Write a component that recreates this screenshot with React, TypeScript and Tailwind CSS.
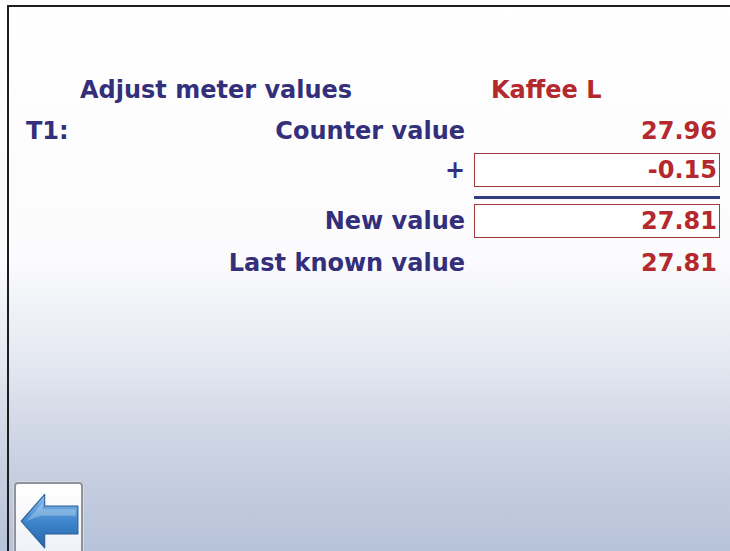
import React from "react";

const navy = "text-[#332f7b]";
const red = "text-[#b3292d]";

export default function App() {
  return (
    <div
      className="relative w-[730px] h-[551px] overflow-hidden bg-[linear-gradient(to_bottom,#ffffff_0%,#fbfbfd_48%,#e3e7f0_66%,#cbd2e2_82%,#b7c3da_100%)]"
      style={{ fontFamily: '"DejaVu Sans", Verdana, sans-serif' }}
    >
      <div className="ml-[7px] mt-[5px] w-[723px] border-t-2 border-l-2 border-t-[#1e1e1e] border-l-[#1e1e1e] flex flex-col pt-[66px] pb-[20px] font-bold text-[24px] leading-none">
        {/* Title row */}
        <div className="h-[34px] flex items-center">
          <div className={`w-[482px] pl-[71px] ${navy}`}>Adjust meter values</div>
          <div className={red}>Kaffee L</div>
        </div>
        {/* Counter value */}
        <div className="mt-[7px] h-[34px] flex items-center">
          <div className={`w-[465px] flex items-center justify-between pl-[17px] pr-[9px] ${navy}`}>
            <span>T1:</span>
            <span>Counter value</span>
          </div>
          <div className={`w-[246px] text-right pr-[3px] ${red}`}>27.96</div>
        </div>
        {/* Plus row */}
        <div className="mt-[5px] h-[34px] flex items-center">
          <div className={`w-[465px] text-right pr-[9px] ${navy}`}>+</div>
          <div className={`w-[246px] h-[34px] border border-[#a23a3a] bg-white flex items-center justify-end pr-[2px] ${red}`}>
            -0.15
          </div>
        </div>
        {/* Line */}
        <div className="mt-[9px] flex">
          <div className="w-[465px]" />
          <div className="w-[246px] h-[3px] bg-[#343c80]" />
        </div>
        {/* New value */}
        <div className="mt-[5px] h-[34px] flex items-center">
          <div className={`w-[465px] text-right pr-[9px] ${navy}`}>New value</div>
          <div className={`w-[246px] h-[34px] border border-[#a23a3a] bg-white flex items-center justify-end pr-[2px] ${red}`}>
            27.81
          </div>
        </div>
        {/* Last known value */}
        <div className="mt-[8px] h-[34px] flex items-center">
          <div className={`w-[465px] text-right pr-[9px] ${navy}`}>Last known value</div>
          <div className={`w-[246px] text-right pr-[3px] ${red}`}>27.81</div>
        </div>
        {/* Back button */}
        <div className="mt-[202px] ml-[5px] w-[69px] h-[72px] rounded-[4px] border-2 border-[#8e939c] bg-[linear-gradient(to_bottom,#ffffff,#eef1f6)] flex items-start justify-center pt-[6px] shadow-[0_0_0_1px_#d6dae2]">
          <svg width="60" height="60" viewBox="0 0 56 56">
            <defs>
              <linearGradient id="ag" x1="0" y1="0" x2="0" y2="1">
                <stop offset="0" stopColor="#8cc0ec" />
                <stop offset="0.5" stopColor="#3f86cc" />
                <stop offset="1" stopColor="#2563a8" />
              </linearGradient>
            </defs>
            <path
              d="M2 29 L24 4 L24 15 L55 15 L55 41 L24 41 L24 54 Z"
              fill="url(#ag)"
              stroke="#2c5d97"
              strokeWidth="1"
              strokeLinejoin="round"
            />
            <path d="M7 29 L22 12 L22 18 L53 18 L53 24 L20 24 Z" fill="#ffffff" opacity="0.25" />
          </svg>
        </div>
      </div>
    </div>
  );
}
